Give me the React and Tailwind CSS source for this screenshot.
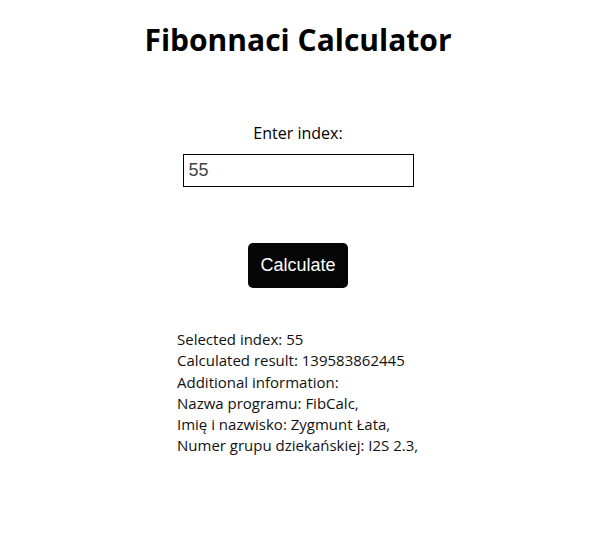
import React, { useState } from 'react';

export default function App() {
  const [index, setIndex] = useState('55');

  return (
    <div className="w-[596px] bg-white text-black font-['Open_Sans',sans-serif]">
      <h1 className="pt-[18px] text-center text-[30px] font-bold leading-[43px]">Fibonnaci Calculator</h1>

      <div className="mt-[61px] flex flex-col items-center">
        <label className="text-[16px] leading-[22px]">Enter index:</label>
        <input
          type="text"
          value={index}
          onChange={(e) => setIndex(e.target.value)}
          className="mt-[10px] h-[33px] w-[231px] border border-black px-[5px] text-[18px] text-[#444] font-['Liberation_Sans',sans-serif] outline-none"
        />
        <button className="mt-[56px] h-[45px] w-[100px] rounded-[5px] bg-[#050505] text-[18px] text-white font-['Liberation_Sans',sans-serif]">
          Calculate
        </button>
      </div>

      <div className="mt-[41px] pl-[177px] text-[15px] leading-[21.3px] text-[#111]">
        <p>Selected index: 55</p>
        <p>Calculated result: 139583862445</p>
        <p>Additional information:</p>
        <p>Nazwa programu: FibCalc,</p>
        <p>Imię i nazwisko: Zygmunt Łata,</p>
        <p>Numer grupu dziekańskiej: I2S 2.3,</p>
      </div>
    </div>
  );
}
